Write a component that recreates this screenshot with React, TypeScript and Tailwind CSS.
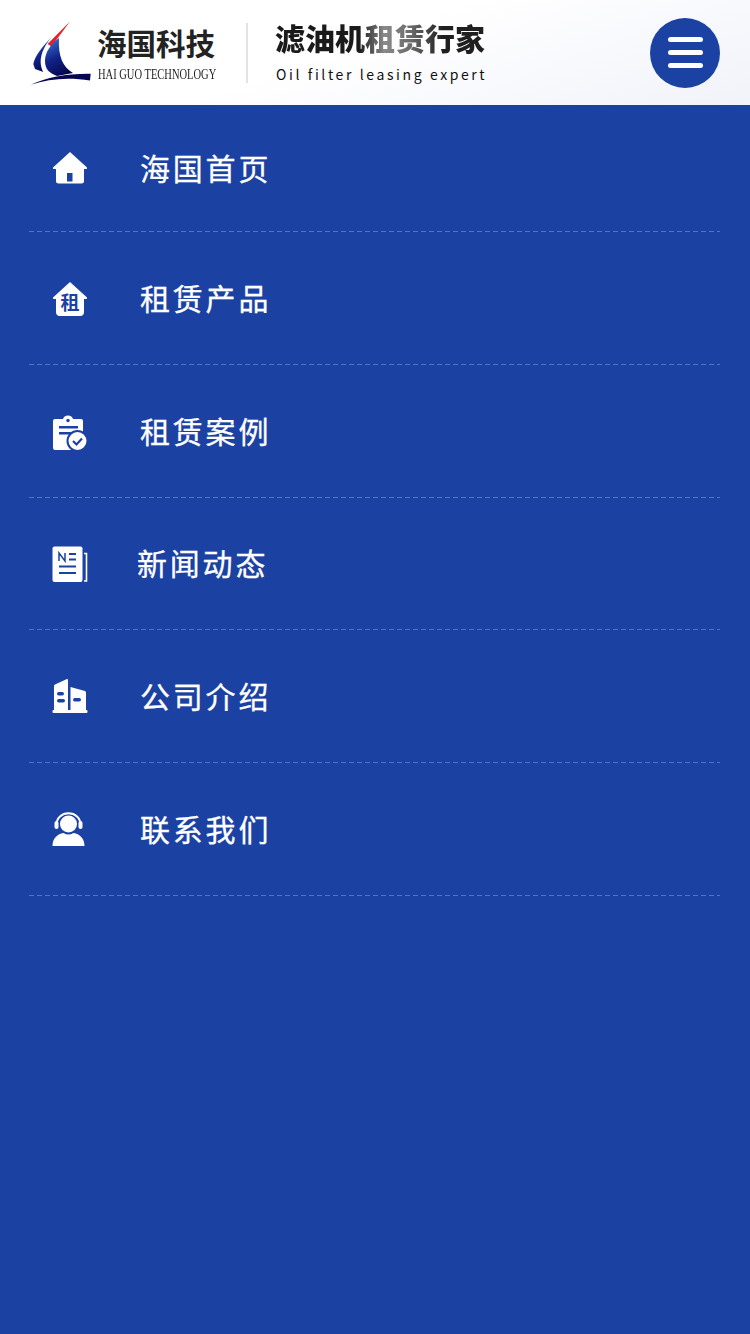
const cjk = "font-['Noto_Sans_CJK_SC','Noto_Sans',sans-serif]";

function Logo() {
  return (
    <svg width="64" height="68" viewBox="0 0 64 68" className="shrink-0">
      <defs>
        <linearGradient id="sail" x1="0.2" y1="0" x2="0.6" y2="1">
          <stop offset="0" stopColor="#3a72d0" />
          <stop offset="0.5" stopColor="#12258c" />
          <stop offset="1" stopColor="#05064a" />
        </linearGradient>
      </defs>
      <path d="M41 2.500 L22.500 27.500 L18.500 25 Z" fill="#e8202a" />
      <path d="M30 19 C29 38 34 48 44 54 L28 57 C20 54 16 50 16 42 C16 33 22 25 30 19 Z" fill="url(#sail)" />
      <path d="M22.700 18 C13 28 6 37 4.300 45 L6 50 L14.300 53 C10 45 10 33 22.700 18 Z" fill="url(#sail)" />
      <path d="M1.700 65.800 C18 58 38 54.500 61.700 54.800 L61 61.500 C40 58 20 59.500 1.700 65.800 Z" fill="#070750" />
    </svg>
  );
}

function HomeIcon() {
  return (
    <svg width="36" height="34" viewBox="0 0 36 34" className="block">
      <path d="M18 1 L35 16.500 Q35.500 18 34 18 L32 18 L32 30 Q32 32.500 29.500 32.500 L6.500 32.500 Q4 32.500 4 30 L4 18 L2 18 Q0.500 18 1 16.500 Z" fill="#fff" />
      <rect x="15" y="22" width="5.500" height="8.500" fill="#1b41a3" />
    </svg>
  );
}

function RentIcon() {
  return (
    <div className="relative w-[36px] h-[36px] mt-[2px]">
      <svg width="36" height="36" viewBox="0 0 36 36" className="block">
        <path d="M18 1 L35 16.500 Q35.500 18 34 18 L32 18 L32 31 Q32 35 28 35 L8 35 Q4 35 4 31 L4 18 L2 18 Q0.500 18 1 16.500 Z" fill="#fff" />
      </svg>
      <span className={`absolute left-0 right-0 top-[10px] text-center text-[19px] leading-[22px] font-bold text-[#1b41a3] ${cjk}`}>租</span>
    </div>
  );
}

function CaseIcon() {
  return (
    <svg width="36" height="36" viewBox="0 0 36 36" className="block mt-[3px]">
      <path d="M3 4 Q1 4 1 6 L1 33 Q1 35 3 35 L31 35 L31 6 Q31 4 29 4 L21 4 Q20 0.500 16 0.500 Q12 0.500 11 4 Z" fill="#fff" />
      <circle cx="16" cy="5.500" r="1.700" fill="#1b41a3" />
      <rect x="7" y="11" width="19" height="2.500" fill="#1b41a3" />
      <rect x="7" y="17" width="13" height="2.500" fill="#1b41a3" />
      <circle cx="25.500" cy="26" r="10" fill="#fff" stroke="#1b41a3" strokeWidth="2" />
      <path d="M21 26 L24.500 29.500 L30 23.500" fill="none" stroke="#1b41a3" strokeWidth="2.200" />
    </svg>
  );
}

function NewsIcon() {
  return (
    <svg width="36" height="36" viewBox="0 0 36 36" className="block">
      <rect x="0.500" y="0.500" width="30" height="35.500" rx="2" fill="#fff" />
      <path d="M32 7.500 L34.500 7.500 L34.500 35 L32 35" fill="none" stroke="#fff" strokeWidth="1.600" />
      <path d="M7 15 L7 7 L13 15 L13 7" fill="none" stroke="#1b41a3" strokeWidth="1.500" />
      <path d="M17 8 L24 8 M17 13.500 L24 13.500 M7 20.500 L24 20.500 M7 27 L24 27" stroke="#1b41a3" strokeWidth="1.800" />
    </svg>
  );
}

function CompanyIcon() {
  return (
    <svg width="36" height="36" viewBox="0 0 36 36" className="block">
      <path d="M2 33 L2 8 Q2 7 3 6.500 L15 1 Q16 0.700 16 2 L16 33 Z" fill="#fff" />
      <path d="M18.500 33 L18.500 9 L33 13 Q34 13.500 34 14.500 L34 33 Z" fill="#fff" />
      <rect x="0.500" y="32" width="35" height="3" rx="1" fill="#fff" />
      <rect x="5" y="14" width="7" height="3.500" rx="1.700" fill="#1b41a3" />
      <rect x="5" y="21" width="8" height="3.500" rx="1.700" fill="#1b41a3" />
      <rect x="21" y="20" width="8" height="3.500" rx="1.700" fill="#1b41a3" />
    </svg>
  );
}

function ContactIcon() {
  return (
    <svg width="36" height="36" viewBox="0 0 36 36" className="block">
      <circle cx="16.500" cy="13" r="8.500" fill="#fff" />
      <path d="M4.500 15 C3.500 -2 29.500 -2 28.500 15" fill="none" stroke="#fff" strokeWidth="2" />
      <rect x="2.500" y="10" width="4" height="8" rx="2" fill="#fff" />
      <rect x="26.500" y="10" width="4" height="8" rx="2" fill="#fff" />
      <path d="M0.500 35 C0.500 27 5.500 23 11.500 22 Q16.500 25 21.500 22 C27.500 23 32.500 27 32.500 35 Z" fill="#fff" />
    </svg>
  );
}

const menu = [
  { label: "海国首页", icon: <HomeIcon />, h: "h-[127px]", textX: "" },
  { label: "租赁产品", icon: <RentIcon />, h: "h-[133px]", textX: "" },
  { label: "租赁案例", icon: <CaseIcon />, h: "h-[133px]", textX: "" },
  { label: "新闻动态", icon: <NewsIcon />, h: "h-[132px]", textX: "-ml-[3px]" },
  { label: "公司介绍", icon: <CompanyIcon />, h: "h-[133px]", textX: "" },
  { label: "联系我们", icon: <ContactIcon />, h: "h-[133px]", textX: "" },
];

export default function App() {
  return (
    <div className={`w-[750px] h-[1334px] bg-[#1b41a3] overflow-hidden ${cjk}`}>
      <header className="h-[105px] flex items-center pl-[29px] pr-[30px] bg-[linear-gradient(160deg,#ffffff_45%,#f1f3fa_100%)]">
        <Logo />
        <div className="ml-[5px] w-[118px] shrink-0">
          <div className="text-[#222] text-[29.5px] leading-[36px] font-bold whitespace-nowrap mt-[1px] -ml-[1px]">海国科技</div>
          <div className="font-['Liberation_Serif',serif] text-[#222] text-[15px] leading-[18px] whitespace-nowrap origin-left scale-x-[0.70] mt-[5px]">HAI GUO TECHNOLOGY</div>
        </div>
        <div className="ml-[30px] w-[2px] h-[60px] bg-[#e2e3e6] shrink-0" />
        <div className="ml-[27px] w-[215px] shrink-0">
          <div className="text-[30px] leading-[36px] font-black whitespace-nowrap bg-[linear-gradient(90deg,#1a1a1a_40%,#8a8a8a_52%,#6a6a6a_65%,#1f1f1f_80%)] bg-clip-text text-transparent w-[210px] mt-[-4px]">滤油机租赁行家</div>
          <div className="text-[#111] text-[14px] leading-[18px] tracking-[2.6px] whitespace-nowrap mt-[10px] ml-[1px]">Oil filter leasing expert</div>
        </div>
        <button className="ml-auto w-[70px] h-[70px] rounded-full bg-[#1b41a3] flex flex-col items-center justify-center gap-[8px] shrink-0">
          <span className="w-[35px] h-[5px] rounded-full bg-white" />
          <span className="w-[35px] h-[5px] rounded-full bg-white" />
          <span className="w-[35px] h-[5px] rounded-full bg-white" />
        </button>
      </header>
      <nav className="mx-[29px] w-[691px]">
        {menu.map((item) => (
          <div key={item.label} className={`${item.h} flex flex-col`}>
            <div className="flex-1 flex items-center">
              <div className="w-[111px] pl-[23px] shrink-0">{item.icon}</div>
              <span className={`${item.textX} text-white text-[30px] leading-[40px] font-normal [-webkit-text-stroke:0.3px_white] tracking-[2.8px] whitespace-nowrap pb-[3px]`}>{item.label}</span>
            </div>
            <div className="h-px bg-[repeating-linear-gradient(90deg,#5573c2_0_5px,transparent_5px_8px)]" />
          </div>
        ))}
      </nav>
    </div>
  );
}
